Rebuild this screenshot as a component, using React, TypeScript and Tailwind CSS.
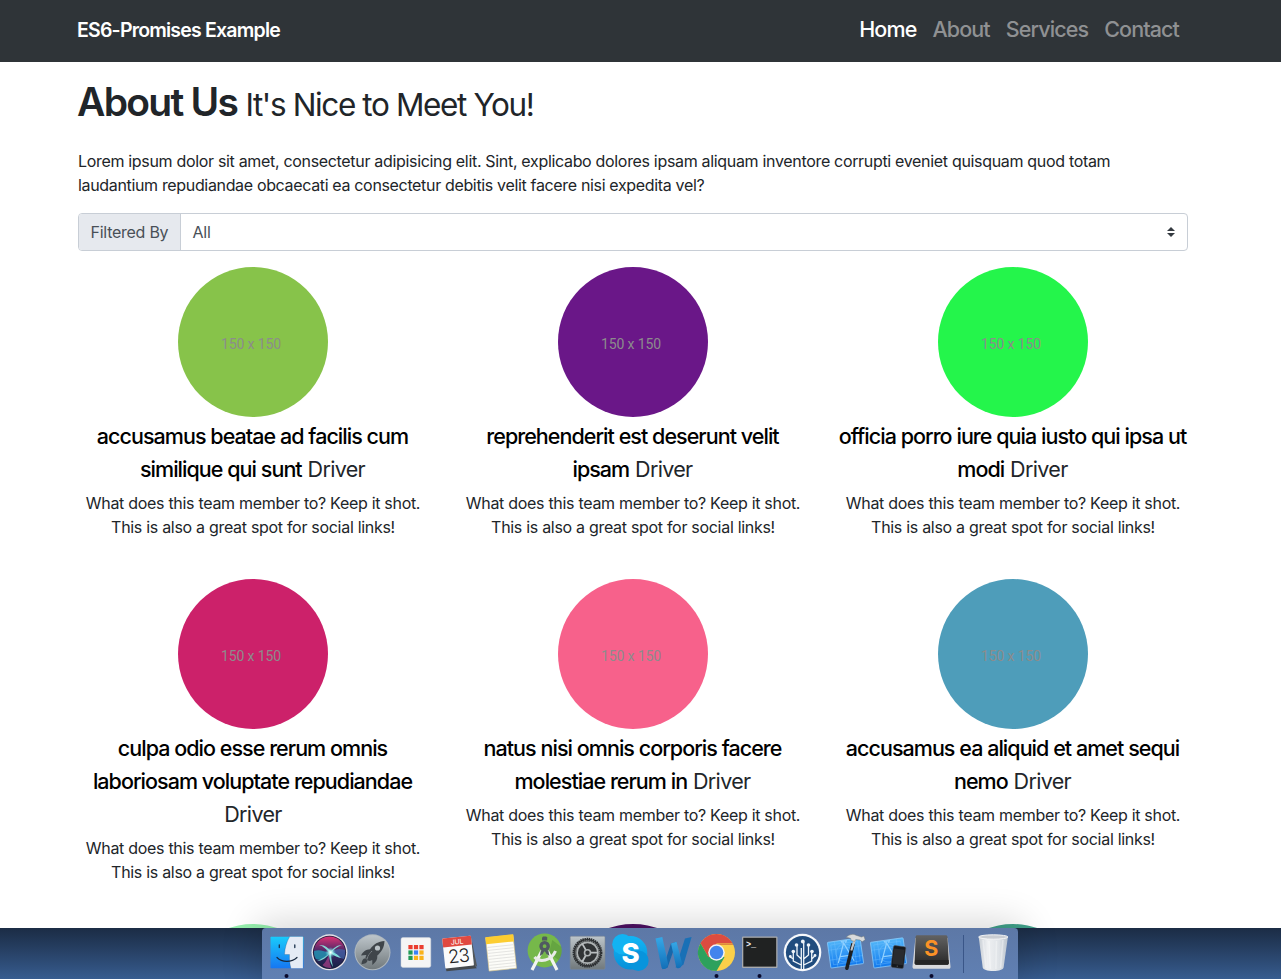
import type { ReactNode } from "react";

type Member = { name: string; color: string };

const members: Member[] = [
  { name: "accusamus beatae ad facilis cum similique qui sunt", color: "bg-[#87c34a]" },
  { name: "reprehenderit est deserunt velit ipsam", color: "bg-[#6a1788]" },
  { name: "officia porro iure quia iusto qui ipsa ut modi", color: "bg-[#24f54b]" },
  { name: "culpa odio esse rerum omnis laboriosam voluptate repudiandae", color: "bg-[#cc216a]" },
  { name: "natus nisi omnis corporis facere molestiae rerum in", color: "bg-[#f7618b]" },
  { name: "accusamus ea aliquid et amet sequi nemo", color: "bg-[#4e9dba]" },
  { name: "", color: "bg-[#96f0ae]" },
  { name: "", color: "bg-[#4d1063]" },
  { name: "", color: "bg-[#3fa089]" },
];

const links = ["Home", "About", "Services", "Contact"];

function Navbar() {
  return (
    <nav className="h-[62px] bg-[#2f3438] pr-[15px]">
      <div className="mx-auto flex h-full w-[1112px] items-center justify-between pr-[2px]">
        <span className="pb-px text-[19.5px] font-semibold tracking-[-0.79px] text-white">ES6-Promises Example</span>
        <ul className="flex pb-[3px] text-[21.5px] font-[550]">
          {links.map((link, i) => (
            <li key={link} className={i === 0 ? "px-2 tracking-[-0.89px] text-white" : "px-2 tracking-[-0.89px] text-[#8f9193]"}>
              {link}
            </li>
          ))}
        </ul>
      </div>
    </nav>
  );
}

function MemberCard({ member }: { member: Member }) {
  return (
    <div className="mb-6 w-[380px] px-[15px] text-center">
      <div className={`mx-auto flex size-[150px] items-center justify-center rounded-full ${member.color}`}>
        {member.name && (
          <span className="pt-1 pr-1 font-['Roboto',sans-serif] text-[14px] tracking-[-0.1px] text-[#8c8c8c]">150 x 150</span>
        )}
      </div>
      {member.name && (
        <>
          <h3 className="-mx-px mb-[5px] pt-[3px] pr-px text-[21.5px] leading-[33px] font-medium tracking-[-0.96px]">
            <span className="font-[550] text-black">{member.name}</span>{" "}
            <span className="pl-[1px] font-normal tracking-[-0.65px]">Driver</span>
          </h3>
          <p className="mb-4 text-base tracking-[-0.3px]">
            What does this team member to? Keep it shot. This is also a great spot for social links!
          </p>
        </>
      )}
    </div>
  );
}

function Slot({ children, running }: { children: ReactNode; running?: boolean }) {
  return (
    <svg width="43" height="51" viewBox="0 0 43 51" className="block shrink-0">
      {children}
      {running && <circle cx="21.5" cy="48" r="2" fill="#0a0a2c" />}
    </svg>
  );
}

const gridColors = ["#ea3d2f", "#ea3d2f", "#ea3d2f", "#219a55", "#3a82f7", "#f9b21b", "#219a55", "#f9b21b", "#f9b21b"];

function Blueprint() {
  return (
    <g transform="rotate(-8 21 25)">
      <rect x="5" y="12" width="33" height="26" rx="0.8" fill="url(#blueprint)" stroke="#8fd0ff" strokeWidth="0.7" />
      <path d="M8 15h27v20H8zM5 20h33M5 30h33M12 12v26M31 12v26" stroke="#79c4ff" strokeWidth="0.35" fill="none" />
      <circle cx="21" cy="25" r="9" stroke="#79c4ff" strokeWidth="0.4" fill="none" />
      <path d="M13 34 21 15l8 19M16 28h11M20 15l-1-2h5l-1 2" stroke="#8fd0ff" strokeWidth="1.2" fill="none" />
    </g>
  );
}

function Dock() {
  return (
    <div className="flex h-[51px] w-[756px] rounded-t-[4px] bg-linear-to-b from-[#5d78a6] to-[#6080b3] pl-[2.5px] shadow-[0_0_36px_6px_rgba(0,0,0,0.16)]">
      <Slot running>
        <defs>
          <linearGradient id="finder" x2="0" y2="1"><stop stopColor="#19cbfb" /><stop offset="1" stopColor="#1677f2" /></linearGradient>
          <linearGradient id="silver" x2="0" y2="1"><stop stopColor="#bdc5ca" /><stop offset="1" stopColor="#71797c" /></linearGradient>
          <linearGradient id="siri" x2="0" y2="1"><stop stopColor="#db3274" /><stop offset="0.5" stopColor="#3d2767" /><stop offset="1" stopColor="#152244" /></linearGradient>
          <radialGradient id="glow"><stop stopColor="#fff" /><stop offset="0.35" stopColor="#b9f5f3" stopOpacity="0.8" /><stop offset="1" stopColor="#43cfd8" stopOpacity="0" /></radialGradient>
          <linearGradient id="blueprint" x2="0" y2="1"><stop stopColor="#50b4f8" /><stop offset="1" stopColor="#1179ee" /></linearGradient>
          <linearGradient id="skype" x2="0" y2="1"><stop stopColor="#12b6f5" /><stop offset="1" stopColor="#0790d9" /></linearGradient>
          <linearGradient id="word" x2="0" y2="1"><stop stopColor="#36a8e7" /><stop offset="1" stopColor="#126fb8" /></linearGradient>
          <linearGradient id="key" x2="0" y2="1"><stop stopColor="#626262" /><stop offset="0.45" stopColor="#494949" /><stop offset="1" stopColor="#282828" /></linearGradient>
          <linearGradient id="trash"><stop stopColor="#c9cfd6" /><stop offset="0.3" stopColor="#eef0f2" /><stop offset="0.7" stopColor="#dfe3e7" /><stop offset="1" stopColor="#bac3ce" /></linearGradient>
        </defs>
        <rect x="5.5" y="8.7" width="33" height="31.5" rx="0.7" fill="url(#finder)" />
        <path d="M24.6 8.7C21.6 14 19.8 20 19.5 26.5h5c-.2 5 .3 9.4 1.4 13.7h12V8.7Z" fill="#e5ebf5" />
        <path d="M14.3 17v2.6M29.8 17v2.6" stroke="#19304b" strokeWidth="1.3" strokeLinecap="round" />
        <path d="M12 29.5c5 5.2 14.5 5.2 20 0" stroke="#18283e" strokeWidth="1.2" strokeLinecap="round" fill="none" />
        <path d="M24.6 8.7C21.6 14 19.8 20 19.5 26.5h5c-.2 5 .3 9.4 1.4 13.7" stroke="#173a60" strokeOpacity="0.4" strokeWidth="0.6" fill="none" />
      </Slot>

      <Slot>
        <circle cx="21.5" cy="24.3" r="18" fill="#e5e1e7" />
        <circle cx="21.5" cy="24.3" r="16.6" fill="#191b3a" />
        <circle cx="21.5" cy="24.3" r="15.8" fill="url(#siri)" />
        <path d="M6 23c5-2 10 0 16 2-6 5-9 8-14 6-2-3-2-5-2-8Z" fill="#1fa8c0" opacity="0.7" />
        <path d="M22 25c5-4 9-5 15-3 .5 3 0 6-1 9-5-1-9-3-14-6Z" fill="#4272b4" opacity="0.6" />
        <path d="M22 25c-4-4-7-7-11-8 6-.5 9 3 12 6 3-3 6-6 11-6-5 2-8 4-10 7 4 1 6 3 9 6-4-1-7-2-10-5 0 5 1 9 2 14-3-5-4-9-4-13-3 4-7 7-12 7 5-2 9-5 13-8Z" fill="#8df6e8" opacity="0.85" />
        <path d="M21.5 26c-1 5 0 10 2 14-5 0-7-1-9-3 3-2 5-7 7-11Z" fill="#e3499f" opacity="0.5" />
        <circle cx="22.5" cy="24.5" r="5.5" fill="url(#glow)" />
      </Slot>

      <Slot>
        <circle cx="21.5" cy="24.3" r="18" fill="#aeb7be" />
        <circle cx="21.5" cy="24.3" r="17" fill="url(#silver)" />
        <path d="M33.5 13c-6 .3-11 3.3-14.5 8.2-4 .1-7.2 2.5-9 6.3l5.4-.5c-.6 1-.9 2-.9 3l3.4 3c1.1-.1 2.2-.5 3.3-1.1l.2 5c3.5-2.4 5.3-5.5 4.9-9.3 4.3-3.8 7-8.3 7.2-14.6Z" fill="#3f454a" />
        <circle cx="26.5" cy="20" r="2.6" fill="#bac2c6" />
        <path d="M14.5 30.3c-2.7.4-3.8 2.5-4 6 3.5-.4 5.5-1.4 6.2-3.8Z" fill="#3f454a" />
        <path d="M21 23c-2 2-4 5-5 8" stroke="#90999e" strokeWidth="0.8" />
      </Slot>

      <Slot>
        <rect x="7" y="9.6" width="29.8" height="29.8" rx="1.8" fill="#f5f5f5" stroke="#cdd1d8" strokeWidth="0.5" />
        {gridColors.map((color, i) => (
          <rect key={i} x={14.4 + (i % 3) * 5.5} y={17 + Math.floor(i / 3) * 5.4} width="4.2" height="4.2" fill={color} />
        ))}
      </Slot>

      <Slot>
        <g transform="rotate(-6 21.5 24)">
          <path d="m7 37 .5 5H38l-2.5-5Z" fill="#44494d" />
          <path d="m35.5 10 3 30.5-3.3-2.5Z" fill="#525659" />
          <rect x="6.7" y="9" width="28.8" height="30" rx="0.8" fill="#fbfbfb" />
          <path d="M6.7 9.8a.8.8 0 0 1 .8-.8h27.2a.8.8 0 0 1 .8.8V18H6.7Z" fill="#e14940" />
          <text x="21" y="16.2" textAnchor="middle" fontFamily="Inter, sans-serif" fontSize="7" letterSpacing="-0.2" fill="#fff">JUL</text>
          <text x="21" y="34.5" textAnchor="middle" fontFamily="Inter, sans-serif" fontSize="18.5" fontWeight="300" letterSpacing="-0.9" fill="#222">23</text>
        </g>
      </Slot>

      <Slot>
        <g transform="rotate(-6 21.5 24)">
          <rect x="7.2" y="8.2" width="27.5" height="33.5" fill="#fcfcf8" stroke="#e0ca88" strokeWidth="0.6" />
          <rect x="7" y="7.6" width="28" height="7.2" fill="#fccd31" />
          {[18, 21, 24, 27, 30, 33, 36, 39].map((y) => (
            <path key={y} d={`M8 ${y}h26`} stroke="#d6d6d3" strokeWidth="0.6" />
          ))}
        </g>
      </Slot>

      <Slot>
        <circle cx="21.6" cy="22.4" r="17" fill="#76b84a" />
        <path d="M26 25 35.7 32A17 17 0 0 0 38.3 19l-9-7Z" fill="#549238" opacity="0.5" />
        <path d="M18.8 23 9 42M24.4 23 34 42" stroke="#f3f4f2" strokeWidth="3.2" />
        <path d="M11.5 29c5 6 17 4 21-6" stroke="#e9ebe8" strokeWidth="3" fill="none" />
        <path d="M19 12.5v-3l1-1h3.2l1 1v3Z" fill="#505a61" />
        <path d="m17.8 22.5-1 5.500 3-2 1.800-3.500 1.800 3.500 3 2-1-5.500Z" fill="#505a61" />
        <circle cx="21.6" cy="18.2" r="3.6" stroke="#505a61" strokeWidth="3.4" fill="#76b84a" />
      </Slot>

      <Slot>
        <rect x="4.2" y="8.2" width="34.8" height="33" rx="1.2" fill="url(#silver)" stroke="#7c8792" strokeWidth="0.6" />
        <circle cx="21.5" cy="24.7" r="13" stroke="#292c2f" strokeWidth="3.8" strokeDasharray="1.4 0.6" fill="#303335" />
        <circle cx="21.5" cy="24.7" r="13.8" fill="#303335" />
        <circle cx="21.5" cy="24.7" r="10.4" stroke="#aeb3b4" strokeWidth="1.7" fill="none" />
        <circle cx="21.5" cy="24.7" r="11.8" stroke="#8f9496" strokeWidth="1.2" strokeDasharray="1.1 0.9" fill="none" />
        <path d="M24 24.7h8M20.2 22.6l-4-7M20.2 26.8l-4 7" stroke="#babfc1" strokeWidth="1.8" />
        <circle cx="21.5" cy="24.7" r="3" stroke="#aeb3b5" strokeWidth="1.6" fill="#303335" />
      </Slot>

      <Slot>
        <circle cx="21.5" cy="24.8" r="16.8" fill="url(#skype)" />
        <circle cx="13.5" cy="16.2" r="10.3" fill="#12b3f2" />
        <circle cx="29.4" cy="32.8" r="10.2" fill="#0894dc" />
        <text x="21.6" y="34.7" textAnchor="middle" fontFamily="Inter, sans-serif" fontSize="27.5" fontWeight="800" fill="#fff">S</text>
      </Slot>

      <Slot>
        <path d="m19 15.500 5.500-1.800-9 26-5 1.500Z" fill="#1767aa" />
        <path d="m33 10.500 6.600-1.600-8.200 27.900-3.600 2-4.200.7Z" fill="#1970b6" />
        <path d="M3.500 10.400 10.300 9l5.700 26.500c.3 2.500-1 5.300-4 5.500-1.600.2-2.300-.4-2.600-2Z" fill="url(#word)" />
        <path d="m19 15.500 5.500-1.800 5.500 21.500c.3 2.500-1 4.800-3.500 5-1.600.1-2.200-.5-2.500-2Z" fill="url(#word)" />
      </Slot>

      <Slot running>
        <circle cx="21.5" cy="24.5" r="18.5" fill="#fbd04a" />
        <path d="M5.5 15.2A18.5 18.5 0 0 1 37.5 15.2H21.5v9.3l-8 4.7Z" fill="#dc4c40" />
        <path d="M5.5 15.2A18.5 18.5 0 0 0 21.5 43l8-13.8-8-4.7-8 4.7Z" fill="#2da15d" />
        <path d="M21.5 16.2h16.4" stroke="#be3c33" strokeWidth="0.7" />
        <circle cx="21.5" cy="24.5" r="8.3" fill="#f3f3f3" />
        <circle cx="21.5" cy="24.5" r="6.8" fill="#4284ed" />
      </Slot>

      <Slot running>
        <rect x="4" y="8.5" width="35.5" height="31.5" rx="1" fill="#a8aaad" />
        <rect x="5.3" y="9.8" width="32.9" height="28.8" fill="#202222" />
        <text x="8" y="18.5" fontFamily="'Liberation Mono', monospace" fontSize="8.5" fontWeight="700" fill="#eef0ee">&gt;_</text>
      </Slot>

      <Slot>
        <circle cx="21.5" cy="24.5" r="18.8" fill="#f6f8fb" />
        <circle cx="21.5" cy="24.5" r="16.6" fill="#204c7e" />
        <g stroke="#eef4f9" strokeWidth="1.3" fill="none">
          <path d="M20.3 41V20M22.7 41V14M20.3 37l-8-4v-9M20.3 31l-4.3-4v-9M22.7 37l8-4v-8M22.7 31l4.8-4v-9M12.3 31l-3-2M30.7 31l3-3" />
        </g>
        <g fill="#eef4f9">
          <circle cx="21.8" cy="13.5" r="1.9" /><circle cx="15.5" cy="17" r="1.8" /><circle cx="27.5" cy="17" r="1.8" />
          <circle cx="12.3" cy="23.5" r="1.8" /><circle cx="31" cy="23.5" r="1.8" /><circle cx="9.3" cy="28.5" r="1.4" /><circle cx="34" cy="27.5" r="1.4" />
        </g>
      </Slot>

      <Slot>
        <Blueprint />
        <path d="m27.3 15 3.6.9-6.4 25.2c-.5 1.6-3.7.8-3.4-.9Z" fill="#1c1e20" />
        <path d="m29.5 11.5 2.3.8-3.5 10.5-2-.6Z" fill="#c1c5c8" />
        <path d="M22 9.5c3-3 7-4 10-2.3l5.5 1.8 2.4-.9 1.3 3.7-3 2-2.3-1.8-4.2-.4-1 1.8-3.5-.8-.5-2.1c-1.5-.8-3-.8-4.7-1Z" fill="#d8dadb" stroke="#6d7478" strokeWidth="0.5" />
      </Slot>

      <Slot>
        <Blueprint />
        <g transform="rotate(7 31 29)">
          <rect x="25.2" y="18" width="12.5" height="22" rx="1.7" fill="#16181c" stroke="#555b63" strokeWidth="0.5" />
          <rect x="26.2" y="21" width="10.5" height="15.5" fill="#292b2f" />
          <circle cx="31.4" cy="38.2" r="0.8" fill="#484b50" />
        </g>
      </Slot>

      <Slot running>
        <path d="m5.4 10-2.9 28.5c-.1 1.5.7 2.3 2 2.3h34c1.5 0 2.2-.8 2-2.3L37.7 10Z" fill="#d8d9dc" />
        <path d="M7.3 7.2h28.4c1 0 1.7.6 1.8 1.5l1.3 26c0 1.4-.6 2-1.8 2H6.4c-1.3 0-1.9-.7-1.8-2l1-26c0-.9.7-1.5 1.7-1.5Z" fill="url(#key)" />
        <path d="m5 32-.3 3c0 1.2.5 1.7 1.7 1.7H37c1.2 0 1.8-.6 1.8-2L38.5 32Z" fill="#252525" />
        <text x="21.3" y="28" textAnchor="middle" fontFamily="Inter, sans-serif" fontSize="21.5" fontWeight="700" fill="#fb9226">S</text>
      </Slot>

      <div className="mt-[7px] ml-[10px] h-[38px] w-px bg-[#3a5688]" />

      <svg width="43" height="51" viewBox="0 0 43 51" className="ml-[8px] block shrink-0">
        <path d="m6.7 9 4 30.5c.3 2 4.7 3.5 10.5 3.5s10-1.5 10.4-3.5L35.9 9Z" fill="url(#trash)" />
        <path d="m11 12 3 28M17 13l1.3 28M24.5 13l-.6 28M31 12l-2.5 28" stroke="#fff" strokeOpacity="0.35" strokeWidth="1.6" />
        <ellipse cx="21.3" cy="9" rx="14.6" ry="2.2" fill="#c9cdd3" stroke="#f4f5f6" strokeWidth="1" />
      </svg>
    </div>
  );
}

export default function App() {
  return (
    <div className="h-[979px] w-[1281px] overflow-hidden bg-white font-['Inter',sans-serif] text-[#212529]">
      <div className="h-[928px] overflow-hidden">
        <Navbar />
        <div className="pr-[15px]">
          <main className="mx-auto w-[1110px] pt-[15px]">
            <h1 className="-ml-px mb-[23px] h-[49px] pt-px text-[39px] leading-[48px] font-semibold tracking-[-1.72px] whitespace-nowrap">
              About Us <small className="text-[31.5px] font-normal tracking-[-1.38px]">It's Nice to Meet You!</small>
            </h1>
            <p className="mb-4 text-base tracking-[-0.322px]">
              Lorem ipsum dolor sit amet, consectetur adipisicing elit. Sint, explicabo dolores ipsam aliquam inventore corrupti eveniet quisquam quod totam
              <br />
              <span className="tracking-[-0.34px]">laudantium repudiandae obcaecati ea consectetur debitis velit facere nisi expedita vel?</span>
            </p>
            <div className="mb-4 flex h-[38px] overflow-hidden rounded border border-[#c8ced6] text-base tracking-[-0.26px] text-[#495057]">
              <span className="flex w-[102px] items-center border-r border-[#c8ced6] bg-[#e6e9ee] pl-[11.5px]">Filtered By</span>
              <div className="flex flex-1 items-center justify-between pr-3 pl-[11.5px]">
                <span>All</span>
                <svg width="8" height="10" viewBox="0 0 4 5">
                  <path fill="#343a40" d="M2 0 0 2h4zm0 5L0 3h4z" />
                </svg>
              </div>
            </div>
            <div className="-mx-[15px] flex flex-wrap">
              {members.map((member, i) => (
                <MemberCard key={i} member={member} />
              ))}
            </div>
          </main>
        </div>
      </div>
      <div className="flex h-[51px] justify-center bg-linear-to-b from-[#1b2c45] to-[#375c8f] pr-px">
        <Dock />
      </div>
    </div>
  );
}
